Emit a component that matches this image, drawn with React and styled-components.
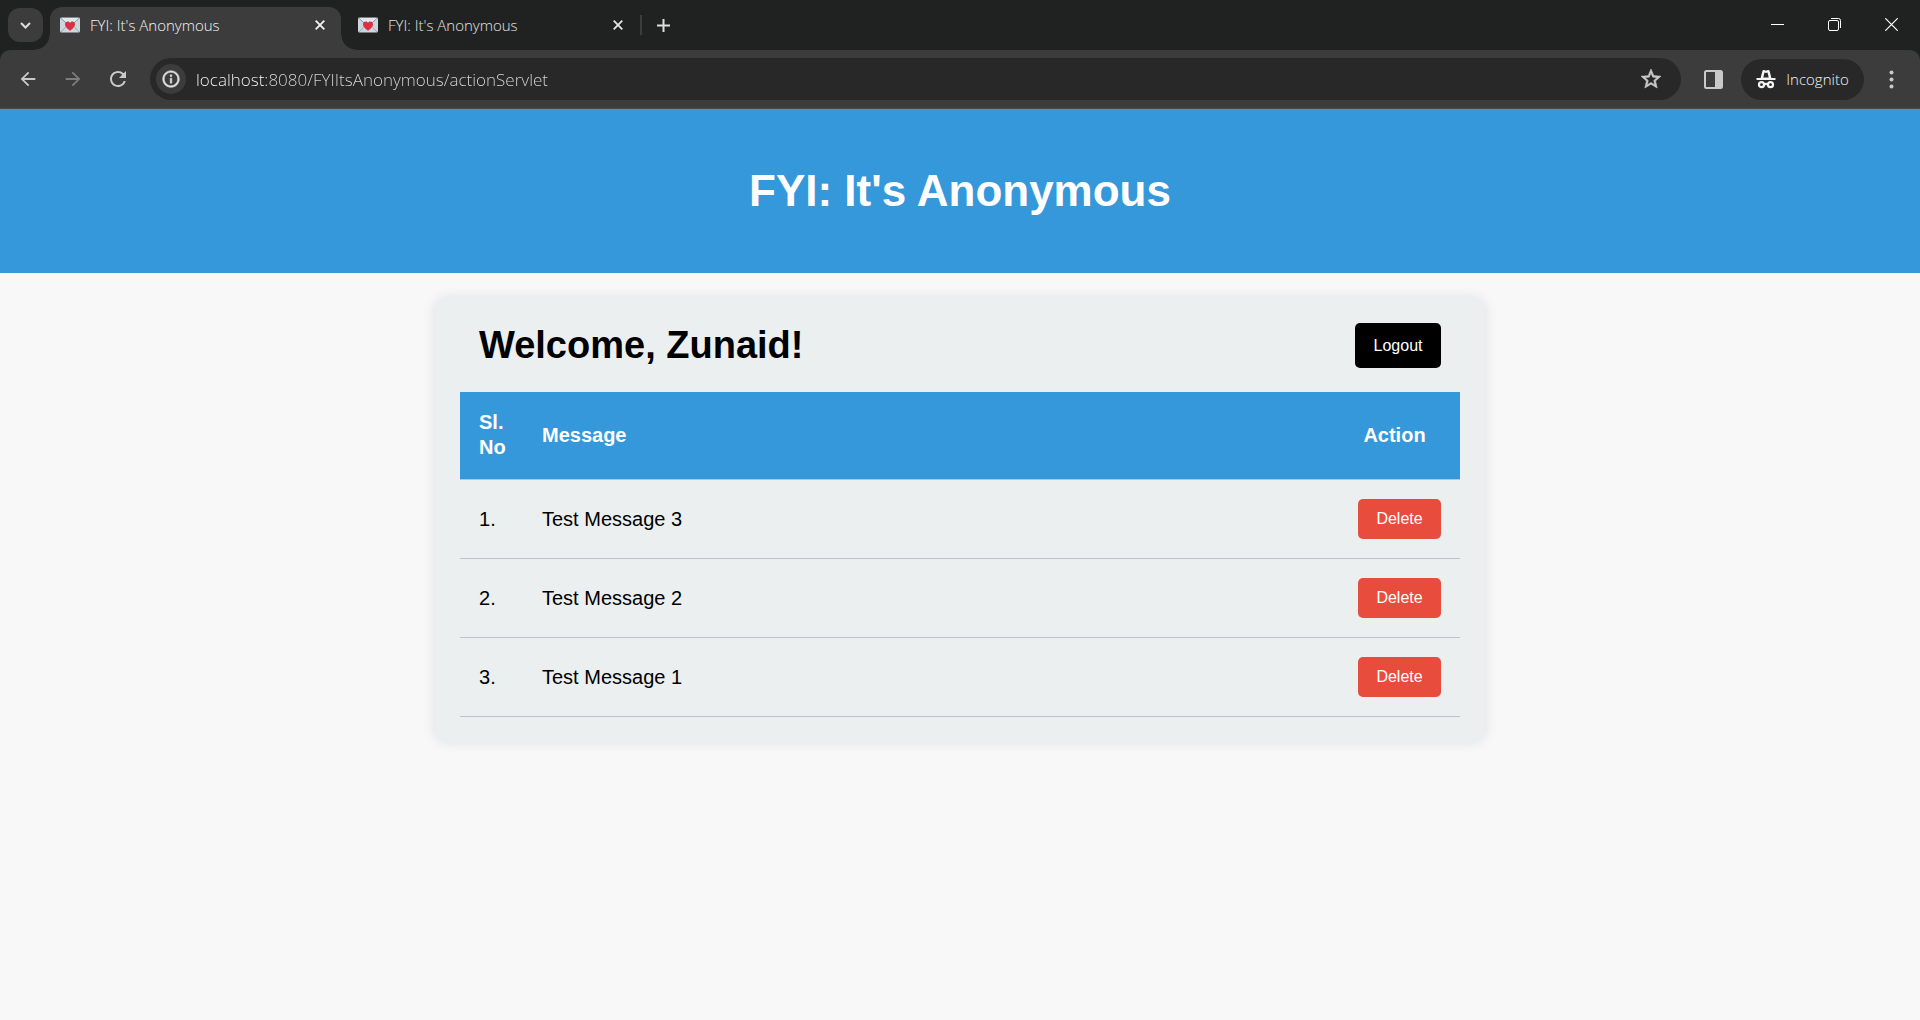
import React, { useState } from "react";
import styled, { createGlobalStyle, css } from "styled-components";

const GlobalStyle = createGlobalStyle`
  *, *::before, *::after { box-sizing: border-box; }
  body {
    margin: 0;
    background: #f8f8f8;
    color: #000;
    font-family: "Liberation Sans", Arial, sans-serif;
    font-size: 20px;
    line-height: 25px;
  }
  button, input { font: inherit; }
`;

const chromeFont = css`
  font-family: "Open Sans", "Noto Sans", sans-serif;
  font-weight: 300;
`;

const bareButton = css`
  display: flex;
  align-items: center;
  justify-content: center;
  flex: none;
  padding: 0;
  border: 0;
  background: transparent;
  color: inherit;
`;

/* ---------- browser window ---------- */

const Browser = styled.header`
  ${chromeFont}
  background: #202221;
  color: #dedede;
`;

const TabStrip = styled.div`
  display: flex;
  align-items: flex-end;
  height: 50px;
  padding-left: 8px;
`;

const TabSearch = styled.button`
  ${bareButton}
  width: 35px;
  height: 34px;
  margin: 0 7px 8px 0;
  border-radius: 12px;
  background: #3c3c3c;
`;

const Tab = styled.div`
  position: relative;
  display: flex;
  align-items: center;
  gap: 10px;
  width: 291px;
  height: 43px;
  margin-right: 7px;
  padding: 0 11px 0 10px;
  border-radius: 12px 12px 0 0;
  background: ${(p) => (p.$active ? "#3c3c3c" : "transparent")};
  color: ${(p) => (p.$active ? "#f4f4f4" : "#e2e4e3")};

  ${(p) =>
    p.$active &&
    css`
      &::before,
      &::after {
        content: "";
        position: absolute;
        bottom: 0;
        width: 15px;
        height: 15px;
      }
      &::before {
        right: 100%;
        background: radial-gradient(circle at 0 0, transparent 14px, #3c3c3c 15px);
      }
      &::after {
        left: 100%;
        background: radial-gradient(circle at 100% 0, transparent 14px, #3c3c3c 15px);
      }
    `}
`;

const TabTitle = styled.button`
  ${bareButton}
  flex: 1;
  justify-content: flex-start;
  gap: 10px;
  height: 34px;
  margin-bottom: 7px;
  font-size: 15px;
  line-height: 20px;
`;

const TabClose = styled.button`
  ${bareButton}
  width: 20px;
  height: 20px;
  margin-bottom: 7px;
`;

const Divider = styled.span`
  width: 2px;
  height: 20px;
  margin: 0 9px 15px -6px;
  background: #3c3c3c;
`;

const NewTab = styled.button`
  ${bareButton}
  width: 24px;
  height: 24px;
  margin-bottom: 13px;
`;

const WindowControls = styled.div`
  display: flex;
  align-self: flex-start;
  margin-left: auto;
  color: #fff;
`;

const WindowButton = styled.button`
  ${bareButton}
  width: 57px;
  height: 49px;
`;

const Toolbar = styled.div`
  display: flex;
  align-items: center;
  gap: 10px;
  height: 59px;
  padding: 0 11px 0 10px;
  border-bottom: 1px solid #4a4a4a;
  border-radius: 10px 10px 0 0;
  background: #3c3c3c;
`;

const ToolButton = styled.button`
  ${bareButton}
  width: 35px;
  height: 35px;
  color: ${(p) => (p.$dim ? "#7c7c7c" : "#c9c9c9")};
`;

const AddressBar = styled.form`
  display: flex;
  align-items: center;
  flex: 1;
  gap: 10px;
  height: 42px;
  margin: 0 5px;
  padding: 0 13px 0 6px;
  border-radius: 21px;
  background: #282828;
`;

const SiteInfo = styled.button`
  ${bareButton}
  width: 30px;
  height: 30px;
  border-radius: 50%;
  background: #3c3c3c;
`;

/* The host name is shown brighter than the path. */
const Address = styled.input`
  flex: 1;
  min-width: 0;
  height: 30px;
  padding: 0;
  border: 0;
  outline: 0;
  background: linear-gradient(90deg, #fff 70px, #dcdcdc 70px);
  background-clip: text;
  color: transparent;
  font-size: 17px;
`;

const Incognito = styled.button`
  ${bareButton}
  gap: 10px;
  width: 123px;
  height: 41px;
  border-radius: 21px;
  background: #282828;
  color: #f4f4f4;
  font-size: 15px;
`;

/* ---------- page ---------- */

const Banner = styled.div`
  padding: 56px 25px;
  background: #3498db;
  color: #fff;
  text-align: center;
`;

const BannerTitle = styled.h1`
  margin: 0;
  font-size: 44px;
  line-height: 52px;
`;

const Card = styled.main`
  max-width: 1050px;
  margin: 25px auto;
  padding: 25px;
  border-radius: 10px;
  background: #ebeff0;
  box-shadow: 0 0 13px rgba(0, 0, 0, 0.1);
`;

const CardHead = styled.div`
  display: flex;
  align-items: center;
  justify-content: space-between;
  margin-bottom: 24px;
  padding: 0 19px;
`;

const Welcome = styled.h2`
  margin: 0;
  font-size: 38px;
  line-height: 45px;
`;

const ActionButton = styled.button`
  min-width: ${(p) => (p.$dark ? 86 : 83)}px;
  height: ${(p) => (p.$dark ? 45 : 40)}px;
  padding: 0 18px;
  border: 0;
  border-radius: 5px;
  background: ${(p) => (p.$dark ? "#000" : "#e74c3c")};
  color: #fff;
  font-size: 16px;
  line-height: 20px;
  vertical-align: top;
  cursor: pointer;
`;

const Messages = styled.table`
  width: 100%;
  border-spacing: 0;
  table-layout: fixed;
`;

const HeadCell = styled.th`
  width: ${(p) => p.$width || "auto"};
  padding: 18px 19px 19px;
  border-bottom: 1px solid #bdc3c7;
  background: #3498db;
  color: #fff;
  text-align: ${(p) => p.$align || "left"};
`;

const Cell = styled.td`
  padding: 19px;
  border-bottom: 1px solid #bdc3c7;
  text-align: ${(p) => p.$align || "left"};
`;

/* ---------- icons ---------- */

const Svg = ({ size = 20, box = 24, weight = 0, children }) => (
  <svg
    width={size}
    height={size}
    viewBox={`0 0 ${box} ${box}`}
    fill="currentColor"
    stroke={weight ? "currentColor" : "none"}
    strokeWidth={weight}
    aria-hidden="true"
  >
    {children}
  </svg>
);

const LoveLetter = () => (
  <svg width="20" height="16" viewBox="0 0 20 16" aria-hidden="true">
    <rect y="0.5" width="20" height="15" rx="1.5" fill="#ccd6dd" />
    <path d="M1 15 7.5 8M19 15 12.500 8" stroke="#99aab5" strokeWidth="1" />
    <path d="M.6 1 10 9.500 19.400 1" fill="#e1e8ed" stroke="#8899a6" strokeWidth="1" />
    <path d="M10 13.800C6.500 11.200 5 9.400 5 7.300c0-3.100 3.800-3.700 5-1.300 1.200-2.400 5-1.800 5 1.300 0 2.100-1.500 3.900-5 6.500z" fill="#dd2e44" />
  </svg>
);

const Cross = () => (
  <svg width="10" height="10" viewBox="0 0 10 10" aria-hidden="true">
    <path d="M.7.7l8.600 8.600M9.300.7.7 9.300" stroke="currentColor" strokeWidth="1.800" />
  </svg>
);

const Chevron = () => (
  <svg width="11" height="7" viewBox="0 0 11 7" fill="none" aria-hidden="true">
    <path d="M1 1l4.500 4.500L10 1" stroke="currentColor" strokeWidth="2" />
  </svg>
);

const Plus = () => (
  <svg width="13" height="13" viewBox="0 0 13 13" aria-hidden="true">
    <path d="M6.500 0v13M0 6.500h13" stroke="currentColor" strokeWidth="2" />
  </svg>
);

const Minimize = () => (
  <svg width="13" height="13" viewBox="0 0 13 13" aria-hidden="true">
    <path d="M0 6.500h13" stroke="currentColor" />
  </svg>
);

const Restore = () => (
  <svg width="13" height="13" viewBox="0 0 13 13" fill="none" aria-hidden="true">
    <rect x=".5" y="2.500" width="10" height="10" rx="1.500" stroke="currentColor" />
    <path d="M3 .5h7.500a2 2 0 0 1 2 2V10" stroke="currentColor" />
  </svg>
);

const CloseWindow = () => (
  <svg width="13" height="13" viewBox="0 0 13 13" aria-hidden="true">
    <path d="M.3.300l12.400 12.400M12.700.3.300 12.700" stroke="currentColor" strokeWidth="1.200" />
  </svg>
);

const Back = () => (
  <Svg size={22}>
    <path d="M20 11H7.830l5.590-5.590L12 4l-8 8 8 8 1.410-1.410L7.830 13H20v-2z" />
  </Svg>
);

const Forward = () => (
  <Svg size={22}>
    <path d="M12 4l-1.410 1.410L16.170 11H4v2h12.170l-5.580 5.590L12 20l8-8z" />
  </Svg>
);

const Reload = () => (
  <Svg size={24}>
    <path d="M17.650 6.350A7.958 7.958 0 0 0 12 4c-4.420 0-7.990 3.580-7.990 8s3.570 8 7.990 8c3.730 0 6.840-2.550 7.730-6h-2.080A5.990 5.990 0 0 1 12 18c-3.310 0-6-2.690-6-6s2.690-6 6-6c1.660 0 3.140.69 4.220 1.780L13 11h7V4l-2.350 2.350z" />
  </Svg>
);

const Info = () => (
  <Svg size={20} weight={0.6}>
    <path d="M11 7h2v2h-2zm0 4h2v6h-2zm1-9C6.480 2 2 6.480 2 12s4.480 10 10 10 10-4.480 10-10S17.520 2 12 2zm0 18c-4.410 0-8-3.590-8-8s3.590-8 8-8 8 3.590 8 8-3.590 8-8 8z" />
  </Svg>
);

const Star = () => (
  <Svg size={24} weight={0.6}>
    <path d="M22 9.240l-7.190-.62L12 2 9.190 8.630 2 9.240l5.460 4.730L5.820 21 12 17.270 18.180 21l-1.630-7.030L22 9.240zM12 15.400l-3.760 2.270 1-4.280-3.320-2.880 4.380-.38L12 6.100l1.710 4.040 4.380.38-3.320 2.880 1 4.280L12 15.400z" />
  </Svg>
);

const SidePanel = () => (
  <svg width="19" height="19" viewBox="0 0 19 19" fill="none" aria-hidden="true">
    <rect x="1" y="1" width="17" height="17" rx="1.500" stroke="currentColor" strokeWidth="2" />
    <path d="M11 1h7v17h-7z" fill="currentColor" />
  </svg>
);

const Spy = () => (
  <svg width="20" height="20" viewBox="0 0 20 20" aria-hidden="true">
    <path d="M4.500 9.500 6.300 2.200c.3-1 1-1.400 1.900-1.100l1.800.6 1.800-.6c.9-.3 1.600.1 1.900 1.100l1.800 7.300zM.5 9h19v2H.5z" fill="currentColor" />
    <path d="M7.300 8.500h5.400L11.500 3.500 10 4l-1.500-.5z" fill="#282828" />
    <g fill="none" stroke="currentColor" strokeWidth="2.200">
      <circle cx="5.500" cy="15.700" r="2.500" />
      <circle cx="14.500" cy="15.700" r="2.500" />
      <path d="M8 15.500q2-1.200 4 0" />
    </g>
  </svg>
);

const Dots = () => (
  <svg width="5" height="19" viewBox="0 0 5 19" fill="currentColor" aria-hidden="true">
    <circle cx="2.500" cy="2.500" r="2" />
    <circle cx="2.500" cy="9.500" r="2" />
    <circle cx="2.500" cy="16.500" r="2" />
  </svg>
);

const PAGE_TITLE = "FYI: It's Anonymous";

function BrowserTab({ active }) {
  return (
    <Tab $active={active}>
      <TabTitle>
        <LoveLetter />
        {PAGE_TITLE}
      </TabTitle>
      <TabClose aria-label="Close tab">
        <Cross />
      </TabClose>
    </Tab>
  );
}

export default function App() {
  const [messages, setMessages] = useState(["Test Message 3", "Test Message 2", "Test Message 1"]);
  const remove = (text) => setMessages((list) => list.filter((m) => m !== text));

  return (
    <>
      <GlobalStyle />
      <Browser>
        <TabStrip>
          <TabSearch aria-label="Search tabs"><Chevron /></TabSearch>
          <BrowserTab active />
          <BrowserTab />
          <Divider />
          <NewTab aria-label="New tab"><Plus /></NewTab>
          <WindowControls>
            <WindowButton aria-label="Minimize"><Minimize /></WindowButton>
            <WindowButton aria-label="Restore"><Restore /></WindowButton>
            <WindowButton aria-label="Close"><CloseWindow /></WindowButton>
          </WindowControls>
        </TabStrip>
        <Toolbar>
          <ToolButton aria-label="Back"><Back /></ToolButton>
          <ToolButton aria-label="Forward" $dim><Forward /></ToolButton>
          <ToolButton aria-label="Reload"><Reload /></ToolButton>
          <AddressBar onSubmit={(e) => e.preventDefault()}>
            <SiteInfo type="button" aria-label="Site information"><Info /></SiteInfo>
            <Address aria-label="Address" defaultValue="localhost:8080/FYIItsAnonymous/actionServlet" />
            <ToolButton type="button" aria-label="Bookmark"><Star /></ToolButton>
          </AddressBar>
          <ToolButton aria-label="Side panel"><SidePanel /></ToolButton>
          <Incognito><Spy />Incognito</Incognito>
          <ToolButton aria-label="Menu"><Dots /></ToolButton>
        </Toolbar>
      </Browser>

      <Banner>
        <BannerTitle>{PAGE_TITLE}</BannerTitle>
      </Banner>

      <Card>
        <CardHead>
          <Welcome>Welcome, Zunaid!</Welcome>
          <ActionButton $dark>Logout</ActionButton>
        </CardHead>
        <Messages>
          <thead>
            <tr>
              <HeadCell $width="63px">Sl. No</HeadCell>
              <HeadCell>Message</HeadCell>
              <HeadCell $width="131px" $align="center">Action</HeadCell>
            </tr>
          </thead>
          <tbody>
            {messages.map((text, i) => (
              <tr key={text}>
                <Cell>{i + 1}.</Cell>
                <Cell>{text}</Cell>
                <Cell $align="right">
                  <ActionButton onClick={() => remove(text)}>Delete</ActionButton>
                </Cell>
              </tr>
            ))}
          </tbody>
        </Messages>
      </Card>
    </>
  );
}
